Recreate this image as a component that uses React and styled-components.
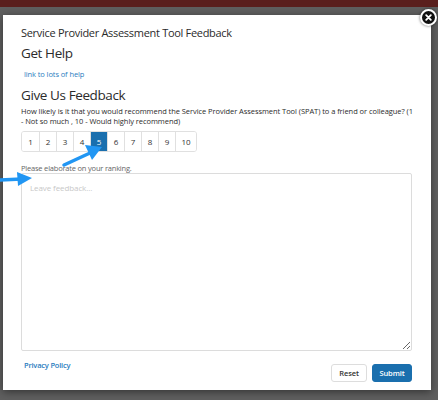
import styled, { createGlobalStyle } from 'styled-components';
import { useState } from 'react';

const GlobalStyle = createGlobalStyle`
  body {
    margin: 0;
    background: #5e5e5e;
    font-family: "Open Sans", "Noto Sans", sans-serif;
  }
`

const Page = styled.div`
  position: relative;
  width: 438px;
  height: 400px;
  overflow: hidden;
  background: #5f5f5f;
`

const TopBand = styled.div`
  height: 7px;
  background: #5a1f1d;
`

const Modal = styled.div`
  position: relative;
  margin: 8px 0 0 3px;
  width: 428px;
  height: 375px;
  box-sizing: border-box;
  background: #ffffff;
  box-shadow: 0 2px 8px rgba(0, 0, 0, 0.45);
  padding: 10px 19px 0 18px;
  display: flex;
  flex-direction: column;
  color: #2b2b2b;
`

const CloseButton = styled.div`
  position: absolute;
  top: -6px;
  right: -6px;
  width: 13px;
  height: 13px;
  border-radius: 50%;
  background: #111;
  border: 2px solid #fff;
  box-shadow: 0 0 3px rgba(0,0,0,0.6);
  display: flex;
  align-items: center;
  justify-content: center;
`

const Title = styled.div`
  font-size: 11px;
  letter-spacing: -0.3px;
  line-height: 16px;
  margin-bottom: 3px;
`

const Heading = styled.div`
  font-size: 13.5px;
  letter-spacing: -0.4px;
  line-height: 18px;
  font-weight: 500;
`

const HelpLink = styled.a`
  display: block;
  color: #2a7dc0;
  font-size: 7.5px;
  letter-spacing: -0.1px;
  line-height: 12px;
  margin: 6px 0 6px 3px;
  text-decoration: none;
`

const Question = styled.div`
  font-size: 7.5px;
  letter-spacing: -0.06px;
  line-height: 10px;
  margin-top: 2px;
  white-space: nowrap;
  color: #2b2b2b;
`

const Scale = styled.div`
  display: flex;
  align-self: flex-start;
  margin-top: 5px;
  border: 1px solid #e0e0e0;
  border-radius: 3px;
  overflow: hidden;
`

const ScaleButton = styled.button`
  width: ${p => p.wide ? 21 : 17}px;
  height: 19px;
  padding: 0;
  border: none;
  border-left: ${p => p.first ? 'none' : '1px solid #e0e0e0'};
  background: ${p => p.active ? '#1a6fae' : '#ffffff'};
  color: ${p => p.active ? '#ffffff' : '#333333'};
  font-family: inherit;
  font-size: 8px;
  cursor: pointer;
`

const Label = styled.div`
  font-size: 7.5px;
  letter-spacing: -0.2px;
  line-height: 10px;
  color: #666;
  margin-top: 11px;
`

const FeedbackArea = styled.textarea`
  margin-top: 0;
  height: 178px;
  box-sizing: border-box;
  border: 1px solid #dcdcdc;
  border-radius: 2px;
  padding: 8px 8px;
  font-family: inherit;
  font-size: 8px;
  letter-spacing: -0.1px;
  color: #333;
  outline: none;
  &::placeholder {
    color: #c8c8c8;
  }
`

const Footer = styled.div`
  display: flex;
  justify-content: space-between;
  align-items: flex-start;
  margin-top: 9px;
`

const PrivacyLink = styled.a`
  color: #2a7dc0;
  font-size: 7.5px;
  letter-spacing: -0.2px;
  line-height: 10px;
  font-weight: 600;
  margin-left: 3px;
  text-decoration: none;
`

const Actions = styled.div`
  display: flex;
  gap: 5px;
  margin-top: 4px;
`

const ActionButton = styled.button`
  height: 18px;
  padding: 0;
  width: ${p => p.primary ? 40 : 36}px;
  border-radius: 3px;
  border: 1px solid ${p => p.primary ? '#1a6fae' : '#dddddd'};
  background: ${p => p.primary ? '#1a6fae' : '#ffffff'};
  color: ${p => p.primary ? '#ffffff' : '#333333'};
  font-family: inherit;
  font-size: 7.5px;
  letter-spacing: -0.1px;
  font-weight: 600;
`

const Annotation = styled.svg`
  position: absolute;
  left: 0;
  top: 0;
  pointer-events: none;
`

function App() {
  const [rank, setRank] = useState(5)
  const values = [1, 2, 3, 4, 5, 6, 7, 8, 9, 10]

  return (
    <Page>
      <GlobalStyle />
      <TopBand />
      <Modal>
        <CloseButton>
          <svg width="7" height="7" viewBox="0 0 7 7">
            <path d="M1.2 1.2 L5.8 5.8 M5.8 1.2 L1.2 5.8" stroke="#fff" strokeWidth="1.8" strokeLinecap="round" />
          </svg>
        </CloseButton>
        <Title>Service Provider Assessment Tool Feedback</Title>
        <Heading>Get Help</Heading>
        <HelpLink href="#">link to lots of help</HelpLink>
        <Heading>Give Us Feedback</Heading>
        <Question>
          How likely is it that you would recommend the Service Provider Assessment Tool (SPAT) to a friend or colleague? (1
          <br />
          - Not so much , 10 - Would highly recommend)
        </Question>
        <Scale>
          {values.map(v => (
            <ScaleButton
              key={v}
              first={v === 1}
              wide={v === 10}
              active={v === rank}
              onClick={() => setRank(v)}
            >
              {v}
            </ScaleButton>
          ))}
        </Scale>
        <Label>Please elaborate on your ranking.</Label>
        <FeedbackArea placeholder="Leave feedback..." />
        <Footer>
          <PrivacyLink href="#">Privacy Policy</PrivacyLink>
          <Actions>
            <ActionButton>Reset</ActionButton>
            <ActionButton primary>Submit</ActionButton>
          </Actions>
        </Footer>
      </Modal>
      <Annotation width="438" height="400" viewBox="0 0 438 400">
        <path d="M64 165 L90 153" stroke="#2196f3" strokeWidth="3.5" strokeLinecap="round" />
        <path d="M85 145 L102 147 L92 160 Z" fill="#2196f3" />
        <path d="M0 180 L22 179" stroke="#2196f3" strokeWidth="3.5" strokeLinecap="round" />
        <path d="M17 172 L32 178 L18 186 Z" fill="#2196f3" />
      </Annotation>
    </Page>
  )
}

export default App;
